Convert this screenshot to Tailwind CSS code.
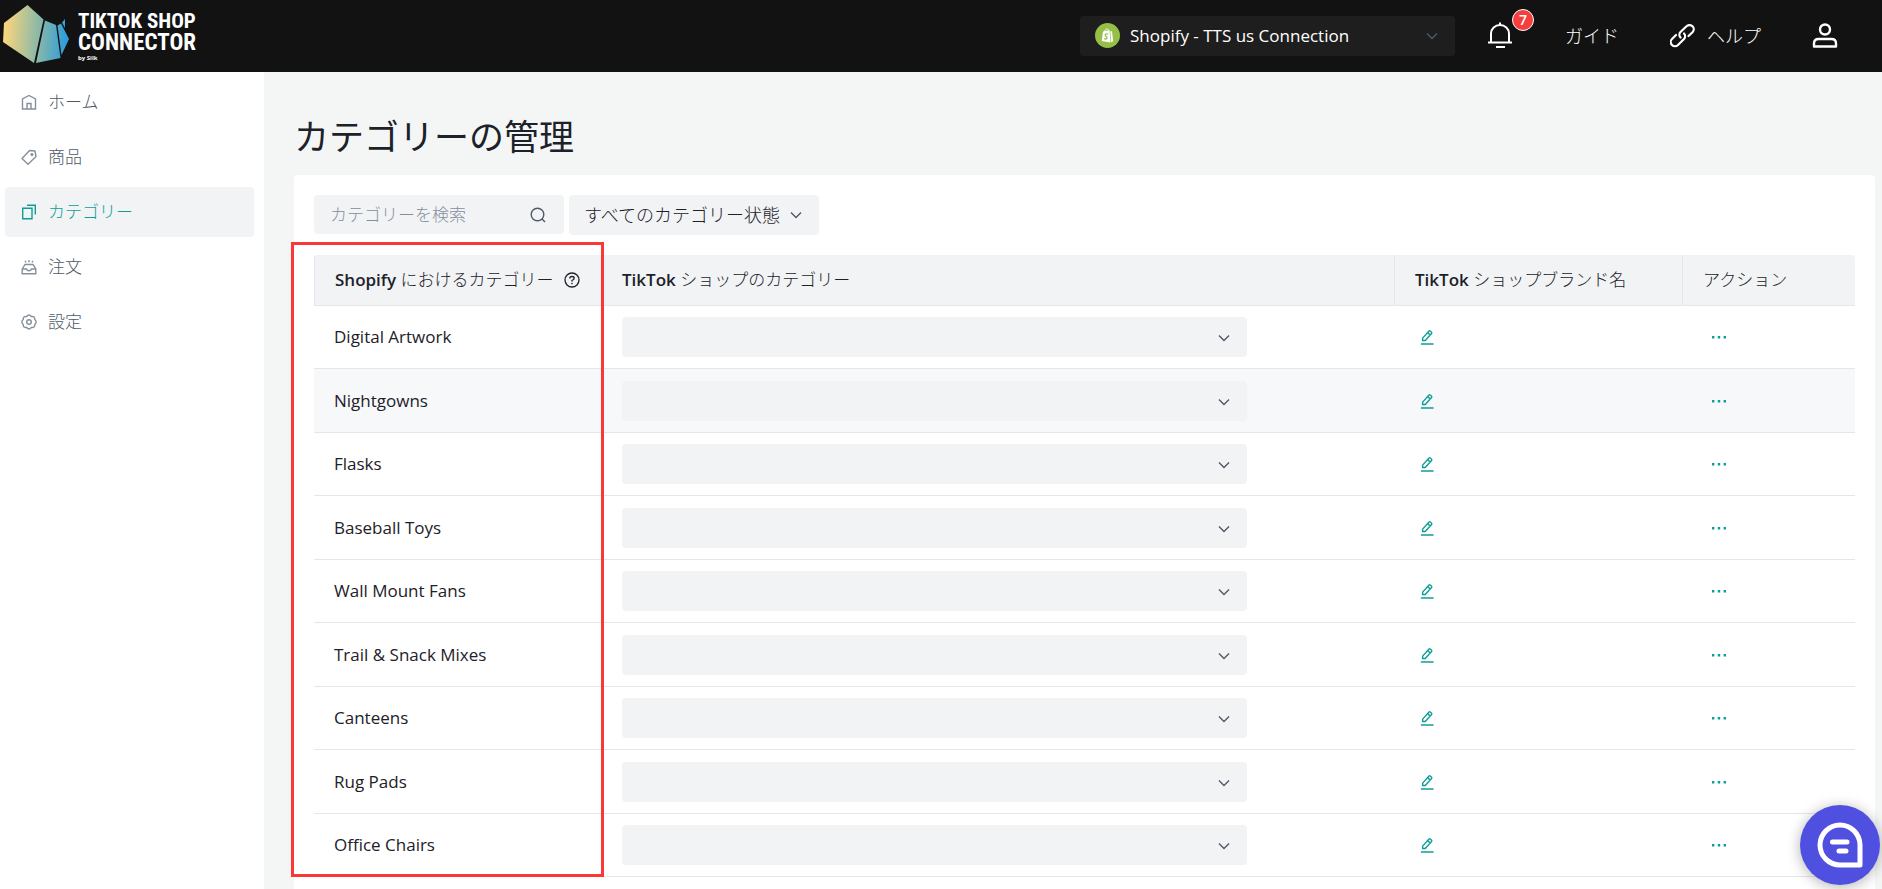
<!DOCTYPE html>
<html lang="ja">
<head>
    <meta charset="UTF-8">
    <meta name="viewport" content="width=device-width, initial-scale=1.0">
    <title>カテゴリーの管理 - TikTok Shop Connector</title>
    <script src="https://cdn.jsdelivr.net/npm/@tailwindcss/browser@4"></script>
</head>
<body class="h-screen overflow-hidden flex flex-col bg-[#f4f6f5] font-['Open_Sans','Noto_Sans_CJK_JP',sans-serif] text-[17px] leading-6 text-[#1d2129]">
    <!-- Shared icons -->
    <svg class="hidden">
        <symbol id="chevron" viewBox="0 0 14 14" fill="none" stroke="currentColor" stroke-width="1.4">
            <path d="M2 4.5 7 9.5 12 4.5"/>
        </symbol>
        <symbol id="pencil" viewBox="0 0 16 18" fill="none" stroke="currentColor" stroke-width="1.6">
            <path d="M1 17H15.500M3 10.300 10.300 2.200Q11 1.500 11.700 2.200L13.200 3.500Q13.900 4.200 13.200 4.900L6 13H3ZM8.800 4 11.600 6.600"/>
        </symbol>
        <symbol id="dots" viewBox="0 0 14 4" fill="currentColor">
            <path d="M0 1h2.400v2.400H0zM5.800 1h2.400v2.400H5.800zM11.600 1H14v2.400h-2.400z"/>
        </symbol>
    </svg>

    <!-- Top bar -->
    <header class="h-[72px] shrink-0 bg-[#121212] text-white flex items-center pl-[3px] pr-11">
        <a href="#" class="flex items-center gap-2">
            <svg class="w-[67px] h-[62px]" viewBox="0 0 67 62">
                <defs>
                    <linearGradient id="logo-fill" gradientUnits="userSpaceOnUse" x1="0" y1="30" x2="64" y2="34">
                        <stop offset="0" stop-color="#ffd67a"/>
                        <stop offset=".5" stop-color="#95bba3"/>
                        <stop offset="1" stop-color="#2c9ddb"/>
                    </linearGradient>
                </defs>
                <g fill="url(#logo-fill)">
                    <path d="M1 18 24.500 0 40.500 14.500 31 58 0 37z"/>
                    <path d="M42 15.500 53 20 57.500 53 33 58z"/>
                    <path d="M54.500 20.500 58 18.500 66 34 58.500 50z"/>
                    <path d="M59 17.500 62 14V23z"/>
                </g>
            </svg>
            <span class="flex flex-col font-['Liberation_Sans_Narrow','Roboto_Condensed','Liberation_Sans',sans-serif] font-bold whitespace-nowrap">
                <span class="text-[21px] leading-[22px]">TIKTOK SHOP</span>
                <span class="text-[23px] leading-[22px]">CONNECTOR</span>
                <span class="text-[6px] leading-2 font-['Open_Sans',sans-serif]">by Silk</span>
            </span>
        </a>

        <div class="relative ml-auto w-[375px]">
            <svg class="absolute left-[15px] top-[7px] w-[25px] h-[25px] pointer-events-none" viewBox="0 0 25 25">
                <circle cx="12.500" cy="12.500" r="12.500" fill="#95bf47"/>
                <path fill="#fff" d="M8 8.500 14.500 7.300 15.500 19.500 6.700 18z"/>
                <path fill="#fff" d="M15.300 8 17 8.500 18.200 18.300 16 19.200z"/>
                <path fill="none" stroke="#fff" d="M9.500 9C10 5.500 13.500 5 14 8"/>
                <path fill="none" stroke="#95bf47" stroke-width="1.300" d="M13 11.200C10.500 10 9.300 12 11 13.200 13.300 14.700 11.500 16.700 9.200 15.700"/>
            </svg>
            <select aria-label="接続" class="appearance-none w-full h-10 pl-[50px] rounded bg-[#1e1e1e] text-white">
                <option>Shopify - TTS us Connection</option>
            </select>
            <svg class="absolute right-4 top-[13px] w-3.5 h-3.5 text-[#4e5969] pointer-events-none"><use href="#chevron"/></svg>
        </div>

        <button aria-label="通知" class="relative ml-[33px]">
            <svg class="w-6 h-7" viewBox="0 0 24 28" fill="none" stroke="currentColor" stroke-width="2">
                <path d="M0 20.500H24M3 20V11.500A9 8.500 0 0 1 21 11.500V20M12 0.500V3M8 25H17"/>
            </svg>
            <span class="absolute left-6 -top-[13px] w-[22px] h-[22px] rounded-full border border-white bg-[#f53f3f] text-[14px] leading-5 font-semibold">7</span>
        </button>
        <a href="#" class="ml-[53px] text-[18px] font-light">ガイド</a>
        <a href="#" class="ml-[51px] flex items-center gap-3 text-[18px] font-light">
            <svg class="w-[25px] h-[25px]" viewBox="0 0 25 25" fill="none" stroke="currentColor" stroke-width="2.200" stroke-linecap="round">
                <path d="M10.500 13.500A4 4 0 0 1 10.500 8L16.500 2.300A4.200 4.200 0 0 1 22.500 8.300L18.500 12"/>
                <path d="M14 9.500A4 4 0 0 1 14 15L8 21A4.200 4.200 0 0 1 2 15L6 11"/>
            </svg>
            ヘルプ
        </a>
        <button aria-label="アカウント" class="ml-[51px]">
            <svg class="w-[26px] h-[26px]" viewBox="0 0 26 26" fill="none" stroke="currentColor" stroke-width="2.400">
                <circle cx="13" cy="6.500" r="5"/>
                <path d="M2 23.500V20.500Q2 16 6.500 16H19.500Q24 16 24 20.500V23.500Z" stroke-linejoin="round"/>
            </svg>
        </button>
    </header>

    <div class="flex flex-1 min-h-0">
        <!-- Sidebar -->
        <nav class="w-[264px] shrink-0 bg-white pt-[5px] pl-[5px] pr-2.5 flex flex-col gap-[5px] font-light text-[#4e5969]">
            <a href="#" class="h-[50px] flex items-center gap-[11px] px-4 rounded">
                <svg class="w-4 h-4 text-[#86909c]" viewBox="0 0 16 16" fill="none" stroke="currentColor" stroke-width="1.400">
                    <path d="M1.500 15V5L8 1.500 14.500 5V15ZM6 15V9.500H10V15"/>
                </svg>
                ホーム
            </a>
            <a href="#" class="h-[50px] flex items-center gap-[11px] px-4 rounded">
                <svg class="w-4 h-4 text-[#86909c]" viewBox="0 0 16 16" fill="none" stroke="currentColor" stroke-width="1.400">
                    <path d="M1 9.500 8.500 1.500 14 2 15 7.500 7 15.200Z" stroke-linejoin="round"/>
                    <circle cx="11" cy="5.500" r=".9"/>
                </svg>
                商品
            </a>
            <a href="#" class="h-[50px] flex items-center gap-[11px] px-4 rounded bg-[#f2f3f5] text-[#0f9d98]">
                <svg class="w-4 h-4" viewBox="0 0 16 16" fill="none" stroke="currentColor" stroke-width="1.400">
                    <path d="M1.700 4.200H11V14.800H1.700ZM6 1.200H14.300V10.500"/>
                </svg>
                カテゴリー
            </a>
            <a href="#" class="h-[50px] flex items-center gap-[11px] px-4 rounded">
                <svg class="w-4 h-4 text-[#86909c]" viewBox="0 0 16 16" fill="none" stroke="currentColor" stroke-width="1.400">
                    <path d="M1.200 10 4 5.500H12L14.800 10V14.800H1.200ZM1.200 10H5.500Q6 11.800 8 11.800T10.500 10H14.800M8 1V3.200M4 1.800 5 3.300M12 1.800 11 3.300"/>
                </svg>
                注文
            </a>
            <a href="#" class="h-[50px] flex items-center gap-[11px] px-4 rounded">
                <svg class="w-4 h-4 text-[#86909c]" viewBox="0 0 16 16" fill="none" stroke="currentColor" stroke-width="1.400" stroke-linejoin="round">
                    <path d="M5.700 2.500Q8 -.5 10.300 2.500Q14 2 13.800 5.500Q16.500 8 13.800 10.500Q14 14 10.300 13.500Q8 16.500 5.700 13.500Q2 14 2.200 10.500Q-.5 8 2.200 5.500Q2 2 5.700 2.500Z"/>
                    <circle cx="8" cy="8" r="2.300"/>
                </svg>
                設定
            </a>
        </nav>

        <!-- Content -->
        <main class="flex-1 min-w-0 overflow-hidden pl-[30px] pr-[7px] pt-10">
            <h1 class="text-[35px] leading-[50px]">カテゴリーの管理</h1>
            <section class="mt-[13px] p-5 bg-white rounded">
                <div class="flex gap-[5px]">
                    <div class="relative w-[250px]">
                        <input type="text" aria-label="カテゴリーを検索" placeholder="カテゴリーを検索" class="w-full h-[39px] pl-4 rounded bg-[#f2f3f5] font-light placeholder:text-[#86909c]">
                        <svg class="absolute right-[18px] top-3 w-4 h-4 text-[#4e5969] pointer-events-none" viewBox="0 0 16 16" fill="none" stroke="currentColor" stroke-width="1.400">
                            <circle cx="7.500" cy="7.500" r="6.300"/><path d="M12 12 15 15"/>
                        </svg>
                    </div>
                    <div class="relative w-[250px]">
                        <select aria-label="カテゴリー状態" class="appearance-none w-full h-10 pl-[15px] rounded bg-[#f2f3f5] text-[18px] font-light">
                            <option>すべてのカテゴリー状態</option>
                        </select>
                        <svg class="absolute right-4 top-[13px] w-3.5 h-3.5 text-[#4e5969] pointer-events-none"><use href="#chevron"/></svg>
                    </div>
                </div>

                <div class="relative mt-5">
                    <table class="w-full table-fixed border-separate border-spacing-0 text-left">
                        <thead>
                            <tr class="h-[51px] bg-[#f2f3f5]">
                                <th class="w-72 px-5 font-light border-b border-l border-[#e5e6eb] rounded-tl whitespace-nowrap">
                                    <span class="flex items-center gap-2.5">
                                        <span><b class="font-semibold">Shopify</b> におけるカテゴリー</span>
                                        <svg class="w-4 h-4 shrink-0" viewBox="0 0 16 16" fill="none" stroke="currentColor" stroke-width="1.300">
                                            <circle cx="8" cy="8" r="7"/><path d="M5.800 6.500Q5.800 4.500 8 4.500T10.200 6.300Q10.200 7.300 8 8.500V9.500M8 10.800V12.200"/>
                                        </svg>
                                    </span>
                                </th>
                                <th class="px-5 font-light border-b border-[#e5e6eb]"><b class="font-semibold">TikTok</b> ショップのカテゴリー</th>
                                <th class="w-72 px-5 font-light border-b border-l border-[#e5e6eb]"><b class="font-semibold">TikTok</b> ショップブランド名</th>
                                <th class="w-[173px] px-5 font-light border-b border-l border-[#e5e6eb] rounded-tr">アクション</th>
                            </tr>
                        </thead>
                        <tbody id="category-rows"></tbody>
                    </table>
                    <!-- Highlight around the first column -->
                    <div class="absolute -left-[23px] -top-[13px] w-[313px] h-[635px] border-3 border-[#fb3838] pointer-events-none"></div>
                </div>
            </section>
        </main>
    </div>

    <!-- Chat launcher -->
    <button aria-label="チャット" class="fixed right-0.5 bottom-1 w-20 h-20 rounded-full bg-[#4f50df] shadow-[0_2px_14px_rgba(0,0,0,0.3)] flex items-center justify-center">
        <svg class="w-[46px] h-[46px]" viewBox="0 0 46 46" fill="none" stroke="#fff" stroke-width="5" stroke-linecap="round" stroke-linejoin="round">
            <path d="M23 3A20 20 0 0 1 43 23V43H23A20 20 0 0 1 23 3ZM15.500 20H30M22 29H29"/>
        </svg>
    </button>

    <script>
        const categories = [
            'Digital Artwork', 'Nightgowns', 'Flasks', 'Baseball Toys', 'Wall Mount Fans',
            'Trail & Snack Mixes', 'Canteens', 'Rug Pads', 'Office Chairs', ''
        ];

        // Build one table row per category
        document.getElementById('category-rows').innerHTML = categories.map((name, i) => `
            <tr class="odd:h-[63px] even:h-16 ${i === 1 ? 'bg-[#f7f8fa]' : 'bg-white'}">
                <td class="px-5 border-b border-[#e5e6eb]">${name.replace('&', '&amp;')}</td>
                <td class="px-5 border-b border-[#e5e6eb]">
                    <div class="relative max-w-[625px]">
                        <select aria-label="${name.replace('&', '&amp;')}" class="block appearance-none w-full h-10 px-4 rounded bg-[#f2f3f5]"><option></option></select>
                        <svg class="absolute right-4 top-3.5 w-3.5 h-3.5 text-[#4e5969] pointer-events-none"><use href="#chevron"/></svg>
                    </div>
                </td>
                <td class="px-6 border-b border-[#e5e6eb]">
                    <button aria-label="編集" class="block px-0.5 text-[#0f9d98]"><svg class="w-3.5 h-4"><use href="#pencil"/></svg></button>
                </td>
                <td class="px-[30px] border-b border-[#e5e6eb]">
                    <button aria-label="その他" class="block text-[#0f9d98]"><svg class="w-3.5 h-1"><use href="#dots"/></svg></button>
                </td>
            </tr>`).join('');
    </script>
</body>
</html>
